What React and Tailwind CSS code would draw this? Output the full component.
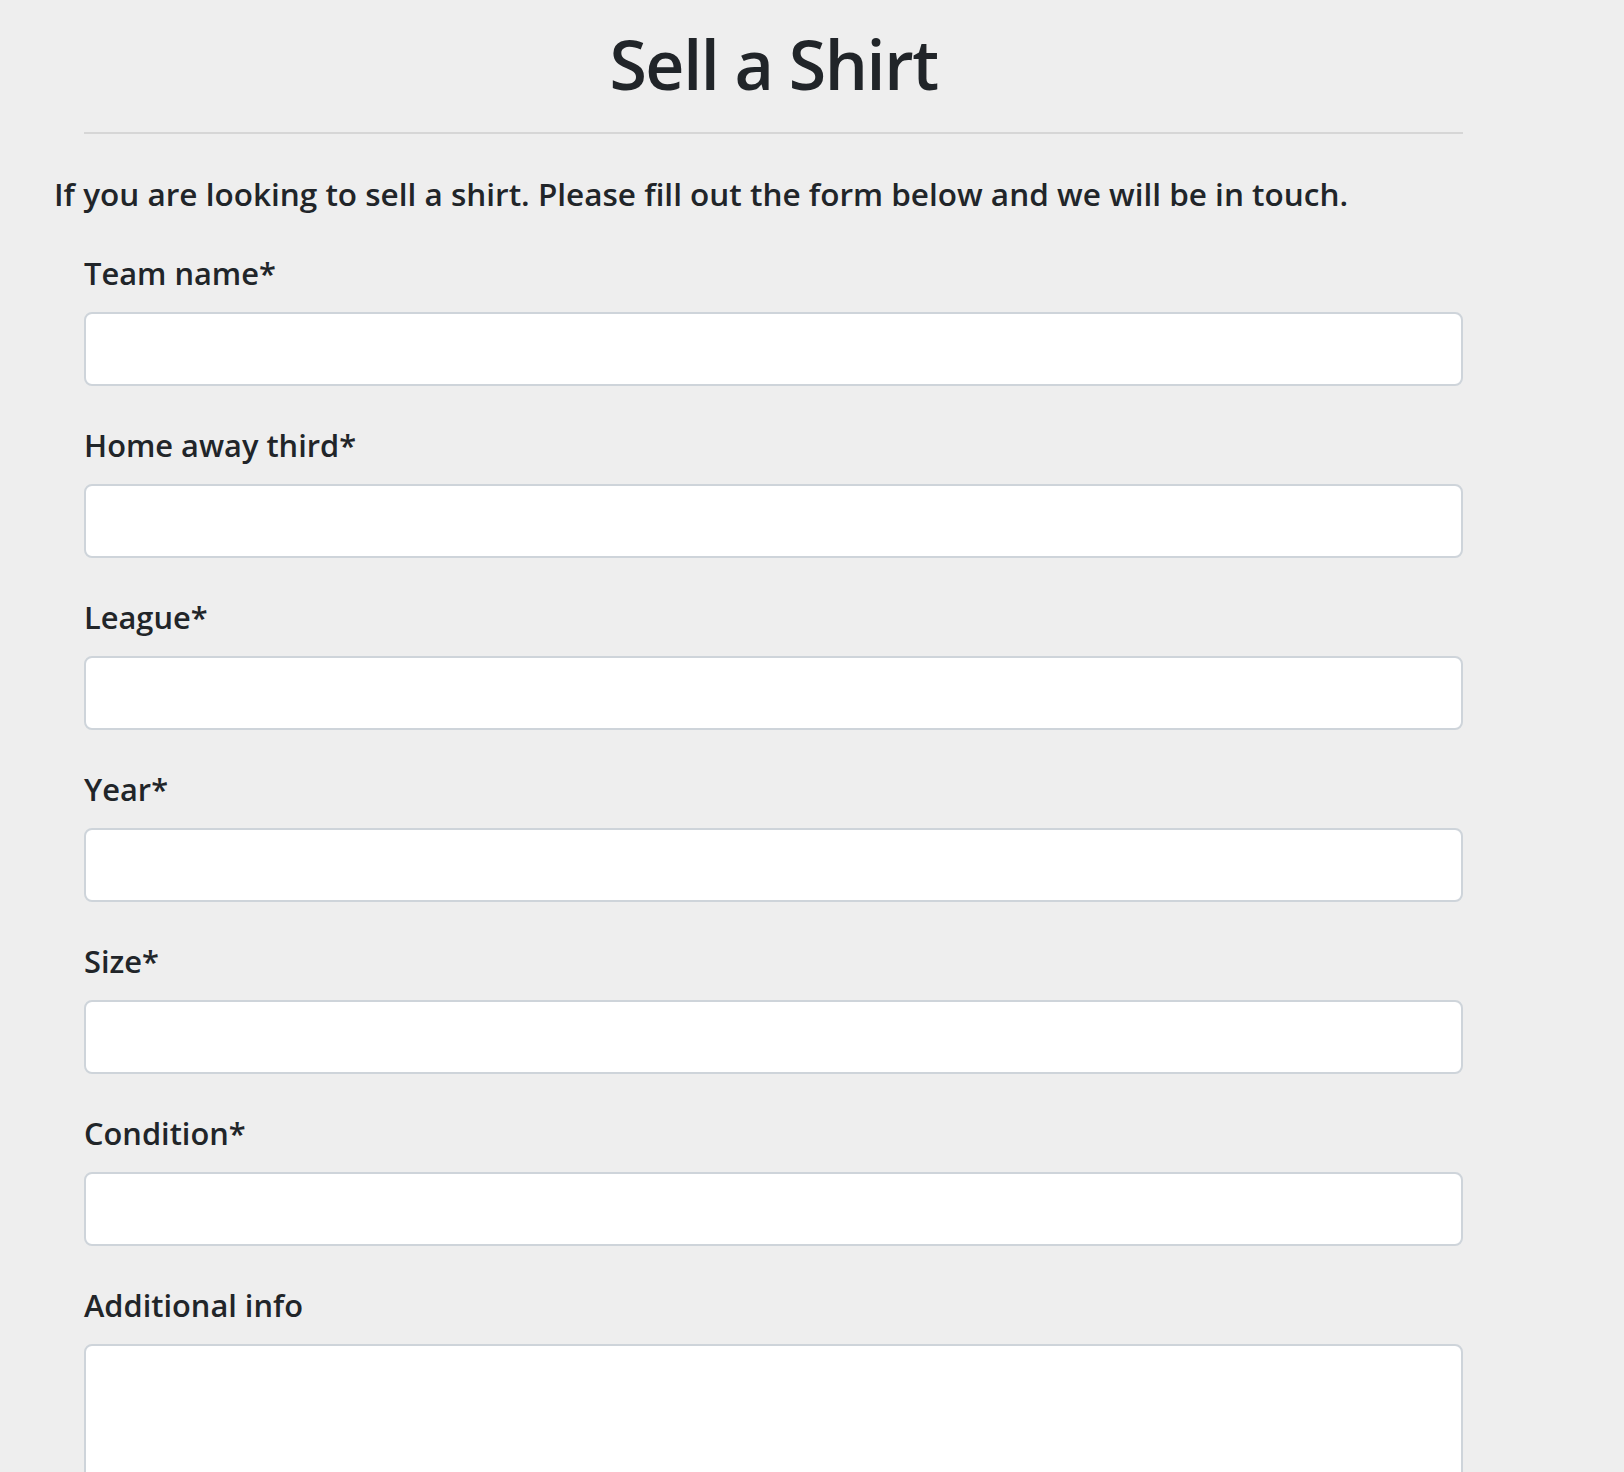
import React from 'react';

const fields = [
  { label: 'Team name*', name: 'team' },
  { label: 'Home away third*', name: 'kit' },
  { label: 'League*', name: 'league' },
  { label: 'Year*', name: 'year' },
  { label: 'Size*', name: 'size' },
  { label: 'Condition*', name: 'condition' },
];

const App = () => {
  return (
    <div className="min-h-screen bg-[#eeeeee] text-[#212529] font-['Open_Sans',sans-serif] font-semibold">
      {/* Heading */}
      <div className="ml-[84px] w-[1379px] pt-[24px]">
        <h1 className="text-center text-[68px] leading-[80px] font-semibold tracking-[-1.4px]">Sell a Shirt</h1>
        <hr className="mt-[28px] border-0 border-t-2 border-[#d6d6d6]" />
      </div>

      <p className="ml-[54px] mt-[37px] text-[31.5px] leading-[45px]">
        If you are looking to sell a shirt. Please fill out the form below and we will be in touch.
      </p>

      {/* Form */}
      <form className="ml-[84px] w-[1379px] mt-[35px]">
        {fields.map((f) => (
          <div key={f.name} className="mb-[37px]">
            <label htmlFor={f.name} className="block text-[30.8px] leading-[45px] mb-[16px]">
              {f.label}
            </label>
            <input
              id={f.name}
              type="text"
              className="block w-full h-[74px] bg-white border-2 border-[#ced4da] rounded-[8px] px-[24px] text-[31px] font-normal outline-none"
            />
          </div>
        ))}
        <div>
          <label htmlFor="info" className="block text-[30.8px] leading-[45px] mb-[16px]">
            Additional info
          </label>
          <textarea
            id="info"
            rows={4}
            className="block w-full h-[220px] bg-white border-2 border-[#ced4da] rounded-[8px] px-[24px] py-[12px] text-[31px] font-normal outline-none resize-none"
          />
        </div>
      </form>
    </div>
  );
};

export default App;
